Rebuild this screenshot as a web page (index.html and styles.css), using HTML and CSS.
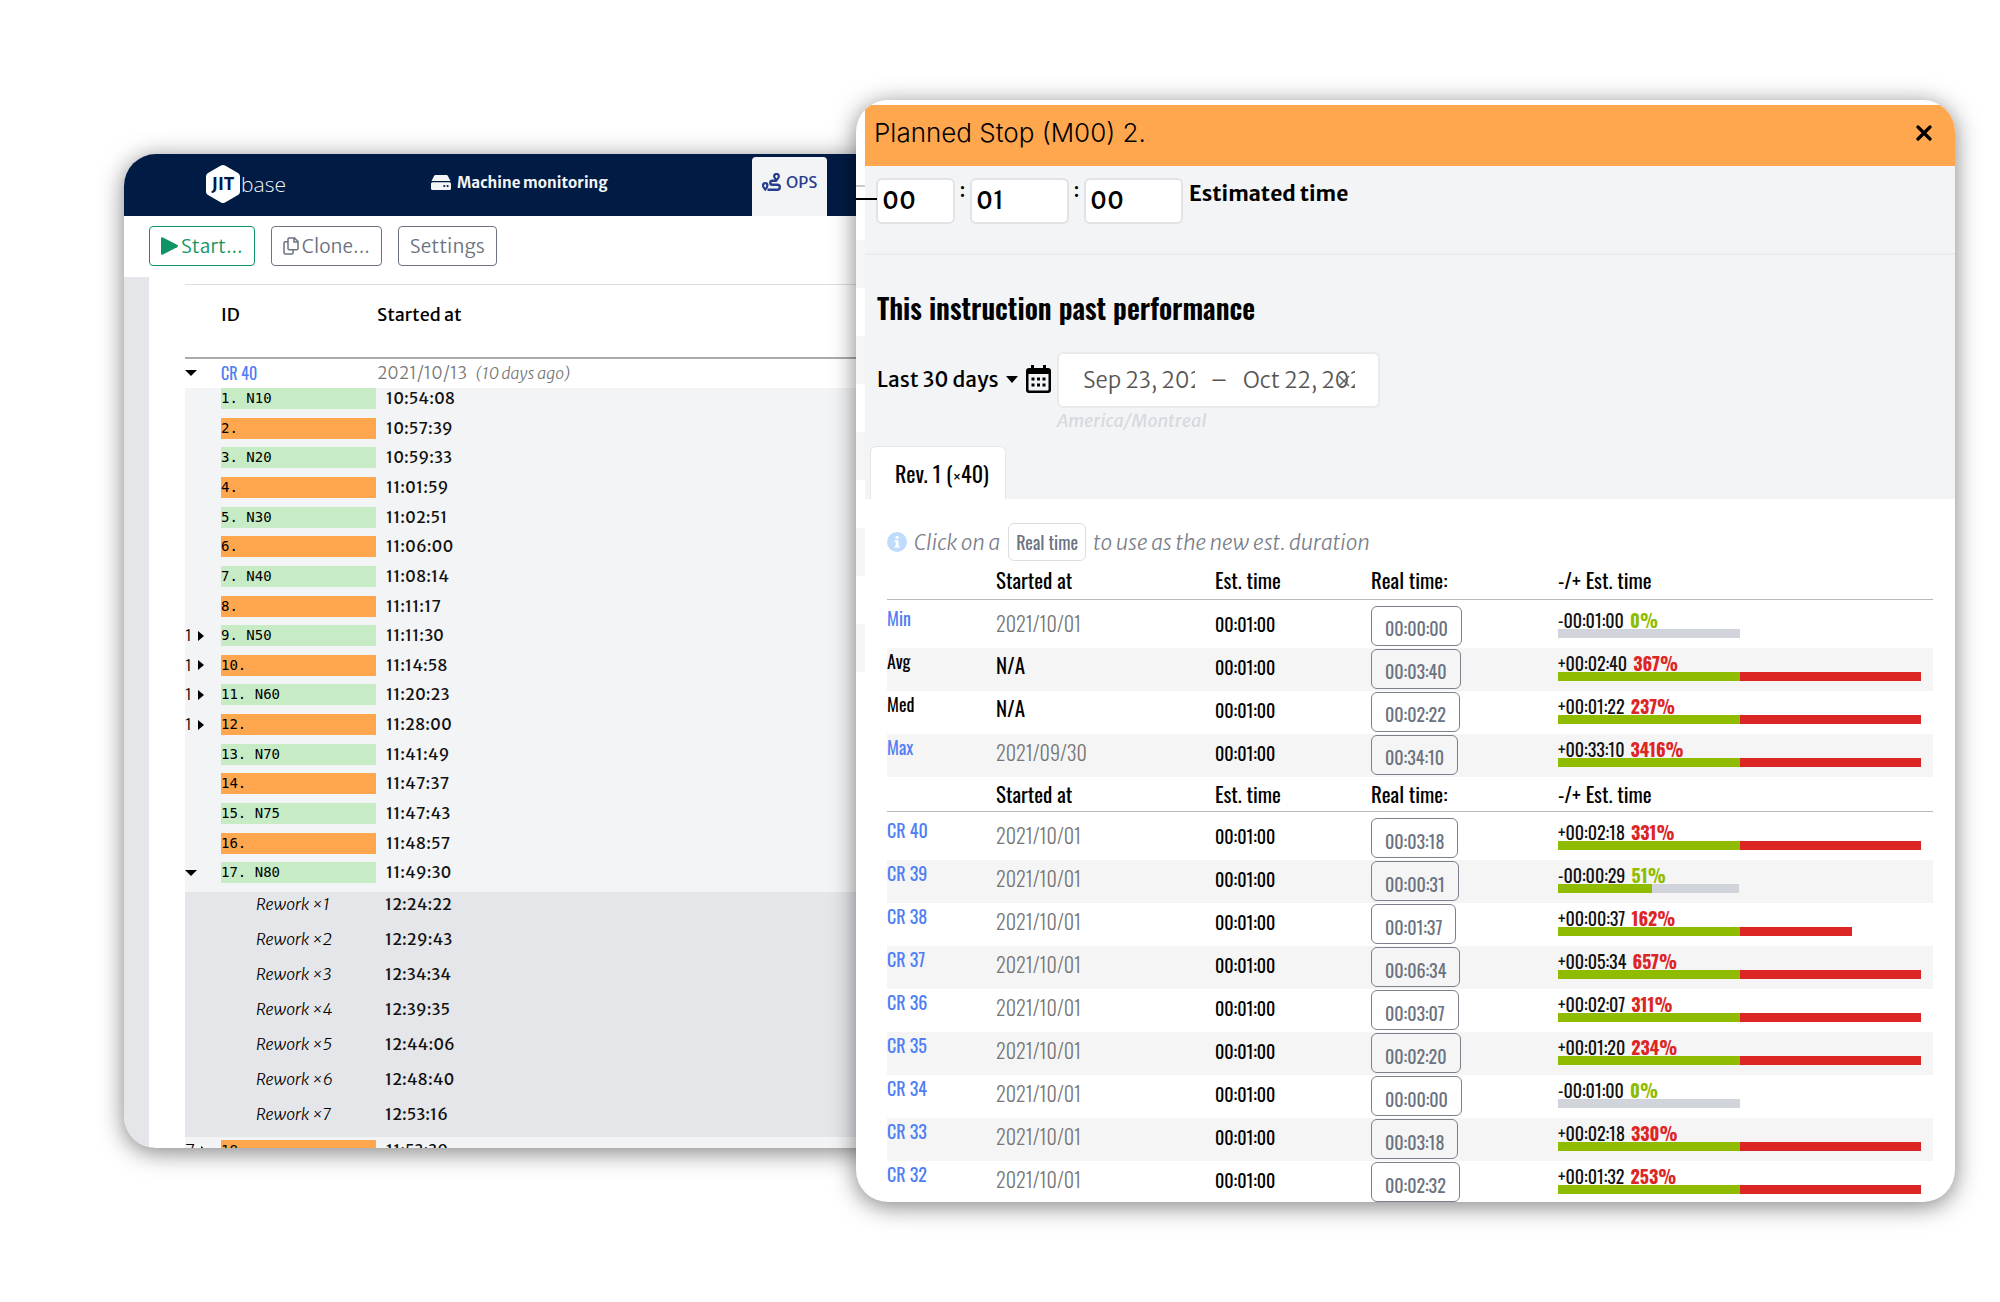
FILE: index.html
```html
<!DOCTYPE html>
<html lang="en">
<head>
<meta charset="utf-8">
<title>JITbase OPS</title>
<link rel="stylesheet" href="styles.css">
</head>
<body>
<main class="stage">
  <section class="monitor">
    <nav class="nav">
      <a class="logo" href="#">
        <span class="logo-mark">
          <svg viewBox="0 0 34 38" width="34" height="38" aria-hidden="true"><path d="M15 .6a4 4 0 0 1 4 0l13 7.3a4 4 0 0 1 2 3.4v15.4a4 4 0 0 1-2 3.4l-13 7.3a4 4 0 0 1-4 0l-13-7.3a4 4 0 0 1-2-3.4V11.300a4 4 0 0 1 2-3.400z" fill="#fff"/></svg>
          <span class="logo-jit">JIT</span>
        </span>
        <span class="logo-base">base</span>
      </a>
      <a class="nav-link" href="#">
        <svg viewBox="0 0 20 15" width="20" height="15" aria-hidden="true"><path d="M4.500 0h11a1.500 1.500 0 0 1 1.300.7L19.500 6H.5L3.200.7A1.500 1.500 0 0 1 4.500 0zM1.500 7.200h17A1.500 1.500 0 0 1 20 8.700v4.800a1.500 1.500 0 0 1-1.500 1.500h-17A1.500 1.500 0 0 1 0 13.500V8.700a1.500 1.500 0 0 1 1.500-1.500z" fill="#f3f4f6"/><circle cx="13.300" cy="11" r="1.100" fill="#001b44"/><circle cx="16.600" cy="11" r="1.100" fill="#001b44"/></svg>
        <span>Machine monitoring</span>
      </a>
      <a class="nav-tab" href="#">
        <svg viewBox="0 0 19 18" width="19" height="18" fill="none" stroke="#263c8f" stroke-width="2.200" aria-hidden="true"><path d="M3.200 16.600C1.800 14.900 1 13.500 1 12.400a2.200 2.200 0 0 1 4.400 0c0 1.100-.8 2.500-2.200 4.200z"/><path d="M14.500 7.300C12.900 5.400 12.100 4.300 12.100 3.300a2.400 2.400 0 0 1 4.800 0c0 1-.8 2.100-2.400 4z"/><path d="M14.500 7.800h-4.200a1.900 1.900 0 0 0 0 4h5a2.500 2.500 0 0 1 0 5H5.500" stroke-width="2.400"/></svg>
        <span>OPS</span>
      </a>
    </nav>
    <div class="toolbar">
      <button class="btn btn-start"><svg viewBox="0 0 17 18" width="17" height="18" aria-hidden="true"><path d="M0 1.500Q0-.5 2 .5l14 7.300q2 1.200 0 2.400L2 17.500Q0 18.500 0 16.500z" fill="#0f9565"/></svg>Start...</button>
      <button class="btn"><svg viewBox="0 0 16 18" width="16" height="18" fill="none" stroke="#6b7280" stroke-width="1.500" aria-hidden="true"><path d="M6.300 1h5.200L15 4.500v7a1.300 1.300 0 0 1-1.300 1.300H6.300A1.300 1.300 0 0 1 5 11.500V2.300A1.300 1.300 0 0 1 6.300 1zM11 1v4h4M5 4.700H2.300A1.300 1.300 0 0 0 1 6v9.700A1.300 1.300 0 0 0 2.300 17h6.500a1.300 1.300 0 0 0 1.300-1.300v-2.900"/></svg>Clone...</button>
      <button class="btn">Settings</button>
    </div>
    <div class="board">
      <div class="log">
        <div class="log-row log-head"><span></span><span>ID</span><span>Started at</span></div>
        <div class="log-row log-cycle"><span><i class="down"></i></span><a class="cond" href="#">CR 40</a><span>2021/10/13 <em>(10 days ago)</em></span></div>
        <div class="steps">
          <div class="log-row"><span></span><code class="go">1. N10</code><time>10:54:08</time></div>
          <div class="log-row"><span></span><code class="stop">2.</code><time>10:57:39</time></div>
          <div class="log-row"><span></span><code class="go">3. N20</code><time>10:59:33</time></div>
          <div class="log-row"><span></span><code class="stop">4.</code><time>11:01:59</time></div>
          <div class="log-row"><span></span><code class="go">5. N30</code><time>11:02:51</time></div>
          <div class="log-row"><span></span><code class="stop">6.</code><time>11:06:00</time></div>
          <div class="log-row"><span></span><code class="go">7. N40</code><time>11:08:14</time></div>
          <div class="log-row"><span></span><code class="stop">8.</code><time>11:11:17</time></div>
          <div class="log-row"><span class="count">1<i class="right"></i></span><code class="go">9. N50</code><time>11:11:30</time></div>
          <div class="log-row"><span class="count">1<i class="right"></i></span><code class="stop">10.</code><time>11:14:58</time></div>
          <div class="log-row"><span class="count">1<i class="right"></i></span><code class="go">11. N60</code><time>11:20:23</time></div>
          <div class="log-row"><span class="count">1<i class="right"></i></span><code class="stop">12.</code><time>11:28:00</time></div>
          <div class="log-row"><span></span><code class="go">13. N70</code><time>11:41:49</time></div>
          <div class="log-row"><span></span><code class="stop">14.</code><time>11:47:37</time></div>
          <div class="log-row"><span></span><code class="go">15. N75</code><time>11:47:43</time></div>
          <div class="log-row"><span></span><code class="stop">16.</code><time>11:48:57</time></div>
          <div class="log-row"><span class="count"><i class="down"></i></span><code class="go">17. N80</code><time>11:49:30</time></div>
        </div>
        <div class="reworks">
          <div class="rework"><em>Rework ×1</em><time>12:24:22</time></div>
          <div class="rework"><em>Rework ×2</em><time>12:29:43</time></div>
          <div class="rework"><em>Rework ×3</em><time>12:34:34</time></div>
          <div class="rework"><em>Rework ×4</em><time>12:39:35</time></div>
          <div class="rework"><em>Rework ×5</em><time>12:44:06</time></div>
          <div class="rework"><em>Rework ×6</em><time>12:48:40</time></div>
          <div class="rework"><em>Rework ×7</em><time>12:53:16</time></div>
        </div>
        <div class="cut"><div class="log-row"><span class="count">7<i class="right"></i></span><code class="stop">18.</code><time>11:53:39</time></div></div>
      </div>
    </div>
  </section>

  <section class="dialog">
    <div class="gutter"><div class="gutter-line"></div><div class="gutter-rule"></div><div class="gutter-stripes"></div></div>
    <div class="dialog-main">
      <header class="dialog-head">
        <h1>Planned Stop (M00) 2.</h1>
        <button class="close" aria-label="Close"><svg viewBox="0 0 16 16" width="16" height="16" aria-hidden="true"><path d="M2 2l12 12M14 2L2 14" stroke="#000" stroke-width="3.200" stroke-linecap="round"/></svg></button>
      </header>
      <div class="estimate">
        <input class="num num-h" aria-label="Hours" value="00"><span class="colon">:</span>
        <input class="num" aria-label="Minutes" value="01"><span class="colon">:</span>
        <input class="num" id="sec" aria-label="Seconds" value="00">
        <label for="sec">Estimated time</label>
      </div>
      <div class="past">
        <h2 class="cond">This instruction past performance</h2>
        <div class="range">
          <button class="period">Last 30 days<i class="down"></i></button>
          <svg class="calendar" viewBox="0 0 25 28" width="25" height="28" aria-hidden="true"><path d="M5 0h3v3h9V0h3v3h2a3 3 0 0 1 3 3v19a3 3 0 0 1-3 3H3a3 3 0 0 1-3-3V6a3 3 0 0 1 3-3h2zM2.500 9v15.500a1 1 0 0 0 1 1h18a1 1 0 0 0 1-1V9z" fill="#000" fill-rule="evenodd"/><path d="M5.500 12.500h3v3h-3zm5.500 0h3v3h-3zm5.500 0h3v3h-3zm-11 6h3v3h-3zm5.500 0h3v3h-3zm5.500 0h3v3h-3z" fill="#000"/></svg>
          <div class="dates-wrap">
            <div class="dates">
              <input aria-label="From" value="Sep 23, 2021"><span>–</span><input aria-label="To" value="Oct 22, 2021">
              <button class="clear" aria-label="Clear"><svg viewBox="0 0 14 14" width="14" height="14" fill="none" stroke="#666" stroke-width="1.500" aria-hidden="true"><path d="M2 2l10 10M12 2L2 12"/></svg></button>
            </div>
            <small>America/Montreal</small>
          </div>
        </div>
        <a class="tab cond" href="#">Rev. 1 (<small>×</small>40)</a>
      </div>
      <div class="results">
        <p class="hint"><svg viewBox="0 0 20 20" width="20" height="20" aria-hidden="true"><circle cx="10" cy="10" r="10" fill="#bfdbfe"/><path d="M8.600 4h3v2.800h-3zM7.500 8.200h4v5.600h1.200v2H7.500v-2h1.300v-3.600H7.500z" fill="#fff"/></svg><em>Click on a</em><button class="sample cond">Real time</button><em>to use as the new est. duration</em></p>
        <table class="cond">
          <colgroup><col class="c-name"><col class="c-start"><col class="c-est"><col class="c-real"><col class="c-diff"></colgroup>
          <thead><tr><th></th><th>Started at</th><th>Est. time</th><th>Real time:</th><th>-/+ Est. time</th></tr></thead>
          <tbody>
            <tr><td><a href="#">Min</a></td><td class="day">2021/10/01</td><td>00:01:00</td><td><button>00:00:00</button></td><td><div class="diff">-00:01:00 <b class="under">0%</b></div><div class="bar"><i class="rest" style="width:50%"></i></div></td></tr>
            <tr><td>Avg</td><td class="na">N/A</td><td>00:01:00</td><td><button>00:03:40</button></td><td><div class="diff">+00:02:40 <b>367%</b></div><div class="bar"><i style="width:50%"></i><i class="over" style="width:50%"></i></div></td></tr>
            <tr><td>Med</td><td class="na">N/A</td><td>00:01:00</td><td><button>00:02:22</button></td><td><div class="diff">+00:01:22 <b>237%</b></div><div class="bar"><i style="width:50%"></i><i class="over" style="width:50%"></i></div></td></tr>
            <tr><td><a href="#">Max</a></td><td class="day">2021/09/30</td><td>00:01:00</td><td><button>00:34:10</button></td><td><div class="diff">+00:33:10 <b>3416%</b></div><div class="bar"><i style="width:50%"></i><i class="over" style="width:50%"></i></div></td></tr>
          </tbody>
        </table>
        <table class="cond">
          <colgroup><col class="c-name"><col class="c-start"><col class="c-est"><col class="c-real"><col class="c-diff"></colgroup>
          <thead><tr><th></th><th>Started at</th><th>Est. time</th><th>Real time:</th><th>-/+ Est. time</th></tr></thead>
          <tbody>
            <tr><td><a href="#">CR 40</a></td><td class="day">2021/10/01</td><td>00:01:00</td><td><button>00:03:18</button></td><td><div class="diff">+00:02:18 <b>331%</b></div><div class="bar"><i style="width:50%"></i><i class="over" style="width:50%"></i></div></td></tr>
            <tr><td><a href="#">CR 39</a></td><td class="day">2021/10/01</td><td>00:01:00</td><td><button>00:00:31</button></td><td><div class="diff">-00:00:29 <b class="under">51%</b></div><div class="bar"><i style="width:26%"></i><i class="rest" style="width:24%"></i></div></td></tr>
            <tr><td><a href="#">CR 38</a></td><td class="day">2021/10/01</td><td>00:01:00</td><td><button>00:01:37</button></td><td><div class="diff">+00:00:37 <b>162%</b></div><div class="bar"><i style="width:50%"></i><i class="over" style="width:31%"></i></div></td></tr>
            <tr><td><a href="#">CR 37</a></td><td class="day">2021/10/01</td><td>00:01:00</td><td><button>00:06:34</button></td><td><div class="diff">+00:05:34 <b>657%</b></div><div class="bar"><i style="width:50%"></i><i class="over" style="width:50%"></i></div></td></tr>
            <tr><td><a href="#">CR 36</a></td><td class="day">2021/10/01</td><td>00:01:00</td><td><button>00:03:07</button></td><td><div class="diff">+00:02:07 <b>311%</b></div><div class="bar"><i style="width:50%"></i><i class="over" style="width:50%"></i></div></td></tr>
            <tr><td><a href="#">CR 35</a></td><td class="day">2021/10/01</td><td>00:01:00</td><td><button>00:02:20</button></td><td><div class="diff">+00:01:20 <b>234%</b></div><div class="bar"><i style="width:50%"></i><i class="over" style="width:50%"></i></div></td></tr>
            <tr><td><a href="#">CR 34</a></td><td class="day">2021/10/01</td><td>00:01:00</td><td><button>00:00:00</button></td><td><div class="diff">-00:01:00 <b class="under">0%</b></div><div class="bar"><i class="rest" style="width:50%"></i></div></td></tr>
            <tr><td><a href="#">CR 33</a></td><td class="day">2021/10/01</td><td>00:01:00</td><td><button>00:03:18</button></td><td><div class="diff">+00:02:18 <b>330%</b></div><div class="bar"><i style="width:50%"></i><i class="over" style="width:50%"></i></div></td></tr>
            <tr><td><a href="#">CR 32</a></td><td class="day">2021/10/01</td><td>00:01:00</td><td><button>00:02:32</button></td><td><div class="diff">+00:01:32 <b>253%</b></div><div class="bar"><i style="width:50%"></i><i class="over" style="width:50%"></i></div></td></tr>
          </tbody>
        </table>
      </div>
    </div>
  </section>
</main>
</body>
</html>
```
FILE: styles.css
```css
* { box-sizing: border-box; }
body { margin: 0; background: #fff; color: #000; font-family: "Merriweather Sans", "Open Sans", "Noto Sans", sans-serif; }
a { color: inherit; text-decoration: none; }
button, input { font: inherit; color: inherit; margin: 0; }
svg { display: block; flex: none; }
.cond { font-family: "Oswald", "Liberation Sans Narrow", "Roboto Condensed", "Open Sans Condensed", sans-serif; }

.stage {
  display: grid;
  grid-template-columns: minmax(0, 732fr) minmax(0, 1099fr);
  align-items: start;
  padding: 100px 45px 100px 124px;
}

/* carets */
.down { width: 0; height: 0; border: 6px solid transparent; border-top: 6px solid #000; border-bottom: 0; }
.right { width: 0; height: 0; border: 5px solid transparent; border-left: 6px solid #000; border-right: 0; }

/* monitoring window */
.monitor {
  margin: 54px -32px 0 0;
  border-radius: 32px;
  overflow: hidden;
  background: #fff;
  box-shadow: 0 4px 24px rgba(0, 0, 0, .5);
}
.nav { display: flex; align-items: center; height: 62px; padding-left: 82px; background: #001b44; color: #f3f4f6; }
.logo { display: flex; align-items: center; gap: 1px; padding-bottom: 2px; }
.logo-mark { display: grid; place-items: center; }
.logo-mark > * { grid-area: 1 / 1; }
.logo-jit { color: #001b44; font-size: 17px; font-weight: 700; line-height: 20px; }
.logo-base { width: 45px; font-family: "Open Sans", sans-serif; font-size: 21px; font-weight: 300; line-height: 36px; }
.nav-link { display: flex; align-items: center; gap: 6px; width: 321px; margin-left: 145px; padding-bottom: 6px; font-size: 15px; font-weight: 600; white-space: nowrap; }
.nav-tab { display: flex; align-items: center; gap: 5px; align-self: stretch; width: 75px; margin-top: 3px; padding: 0 10px 9px; border-radius: 4px 4px 0 0; background: #f3f4f6; color: #263c8f; font-size: 16px; }
.toolbar { display: flex; gap: 16px; height: 61px; padding: 10px 25px; }
.btn { display: flex; align-items: center; gap: 3px; height: 40px; padding: 0 11px; border: 1px solid #6b7280; border-radius: 4px; background: #fff; color: #6b7280; font-size: 19px; font-weight: 300; }
.btn-start { border-color: #0f9565; color: #0f9565; }
.board { padding: 7px 0 0 36px; border-left: 25px solid #e5e6ea; }
.log-row { display: grid; grid-template-columns: 36px 155px 1fr; align-items: center; }
.log-head { height: 75px; padding-bottom: 14px; border-top: 1px solid #ddd; border-bottom: 2px solid #aaa; font-size: 18px; }
.log-head span:last-child, .log-cycle > span:last-child { padding-left: 1px; }
.log-cycle { height: 29px; padding-bottom: 2px; font-size: 17px; font-weight: 300; color: #777; }
.log-cycle .down { display: block; }
.log-cycle a { color: #4f7df3; font-size: 16px; font-weight: 400; }
.log-cycle em { margin-left: 5px; font-size: 16px; font-weight: 300; }
.steps { display: grid; grid-auto-rows: 1fr; align-items: start; height: 504px; background: #f3f4f6; }
.log-row code { height: 21px; font: 14px/21px "DejaVu Sans Mono", monospace; }
.go { background: #c7ebc5; }
.stop { background: #ffa74f; }
time { padding-left: 10px; font-size: 16px; line-height: 21px; color: #111; }
.count { display: flex; align-items: center; gap: 6px; font-size: 16px; font-weight: 300; line-height: 21px; }
.reworks { background: #e5e6ea; }
.rework { display: grid; grid-template-columns: 190px 1fr; height: 35px; }
.rework em { padding-left: 71px; font-size: 16px; font-weight: 300; line-height: 24px; }
.rework time { line-height: 24px; }
.cut { height: 11px; padding-top: 3px; overflow: hidden; background: #f3f4f6; }

/* instruction dialog */
.dialog {
  z-index: 1;
  display: grid;
  grid-template-columns: 9px minmax(0, 1fr);
  padding-top: 5px;
  border-radius: 32px;
  overflow: hidden;
  background: #fff;
  box-shadow: 0 4px 24px rgba(0, 0, 0, .5);
}
.gutter { z-index: 1; }
.gutter-line { height: 82px; border-bottom: 2px solid #ccc; }
.gutter-rule { width: 21px; height: 13px; border-bottom: 2px solid #000; }
.gutter-stripes { height: 432px; margin-top: 40px; background: repeating-linear-gradient(#f5f5f5 0 48px, #fff 48px 96px); }
.dialog-head { display: flex; align-items: center; justify-content: space-between; height: 61px; padding: 0 23px 5px 9px; background: #ffa74f; }
h1 { margin: 0; font: 300 26px/40px Inter, sans-serif; }
.close, .clear { display: grid; place-items: center; padding: 0; border: 0; background: none; }
.estimate { display: flex; align-items: flex-start; height: 89px; padding: 12px 11px; border-bottom: 2px solid #ebecee; background: #f3f4f6; }
.num { width: 99px; height: 46px; padding: 0 4px 2px; border: 2px solid #e2e3e6; border-radius: 6px; background: #fff; font-size: 25px; }
.num-h { width: 79px; }
.colon { width: 15px; font-size: 20px; line-height: 24px; text-align: center; }
.estimate label { margin-left: 6px; font-size: 21px; font-weight: 600; line-height: 32px; }
.past { padding: 33px 0 0 5px; background: #f3f4f6; }
h2 { margin: 0; padding-left: 7px; font-size: 28px; font-weight: 600; line-height: 40px; }
.range { display: flex; align-items: flex-start; padding: 24px 0 0 7px; }
.period { display: flex; align-items: center; gap: 7px; width: 149px; height: 54px; padding: 0; border: 0; background: none; font-size: 21px; white-space: nowrap; }
.period .down { border-width: 7px 6px 0; }
.calendar { margin: 13px 6px 0 0; }
.dates { position: relative; display: flex; align-items: center; width: 323px; height: 56px; padding-left: 24px; border: 2px solid #e9eaec; border-radius: 6px; background: #fff; color: #555; font-size: 22px; font-weight: 300; }
.dates input { width: 112px; padding: 0; border: 0; background: none; }
.dates span { width: 48px; text-align: center; }
.clear { position: absolute; top: 20px; right: 27px; }
.dates-wrap { height: 94px; }
.dates-wrap small { display: block; color: #d6d9df; font-size: 18px; font-style: italic; line-height: 26px; }
.tab { display: block; width: fit-content; padding: 0 16px 0 24px; border: 1px solid #e5e6e8; border-bottom: 0; border-radius: 6px 6px 0 0; background: #fff; font-size: 22px; line-height: 52px; }
.tab small { font-family: "DejaVu Sans", sans-serif; font-size: 10px; font-weight: 700; line-height: 20px; vertical-align: 3px; }
.results { padding: 24px 22px 0; }
.hint { display: flex; align-items: center; margin: 0; height: 38px; color: #7b808a; font-size: 21px; font-weight: 300; white-space: nowrap; }
.hint em:first-of-type { margin: 0 8px 0 7px; }
.sample { height: 38px; margin-right: 7px; padding: 0 7px; border: 1px solid #dcdee2; border-radius: 6px; background: #fff; color: #6b7280; font-size: 18px; font-weight: 400; }
table { width: 100%; table-layout: fixed; border-collapse: collapse; font-size: 18px; }
.c-name { width: 109px; }
.c-start { width: 219px; }
.c-est { width: 156px; }
.c-real { width: 187px; }
th { height: 35px; padding: 0; border-bottom: 1px solid #b5b8bd; font-size: 21px; font-weight: 400; line-height: 30px; text-align: left; }
.hint + table th { height: 38px; }
tbody::before { content: ""; display: block; height: 5px; }
tbody tr:nth-child(even) { background: #f5f5f5; }
td { height: 43px; padding: 7px 0 0; vertical-align: top; line-height: 24px; }
table:last-child tr:last-child td { height: 41px; }
td:first-child { padding-top: 1px; }
td:first-child a { color: #4f7df3; }
td:nth-child(4) { padding-top: 1px; }
td:nth-child(5) { padding: 5px 12px 0 0; }
td.day { padding-top: 6px; color: #777; font-size: 20px; font-weight: 300; }
td.na { padding-top: 5px; font-size: 21px; }
td button { display: block; height: 40px; padding: 5px 13px 0; border: 1px solid #7b808a; border-radius: 6px; background: transparent; color: #6b7280; }
.diff { height: 19px; color: #111; line-height: 21px; }
.diff b { margin-left: 2px; color: #dc2626; }
.diff .under { color: #8fbc00; }
.bar { display: flex; height: 9px; }
.bar i { background: #8fbc00; }
.bar .over { background: #dc2626; }
.bar .rest { background: #d1d5db; }
```
